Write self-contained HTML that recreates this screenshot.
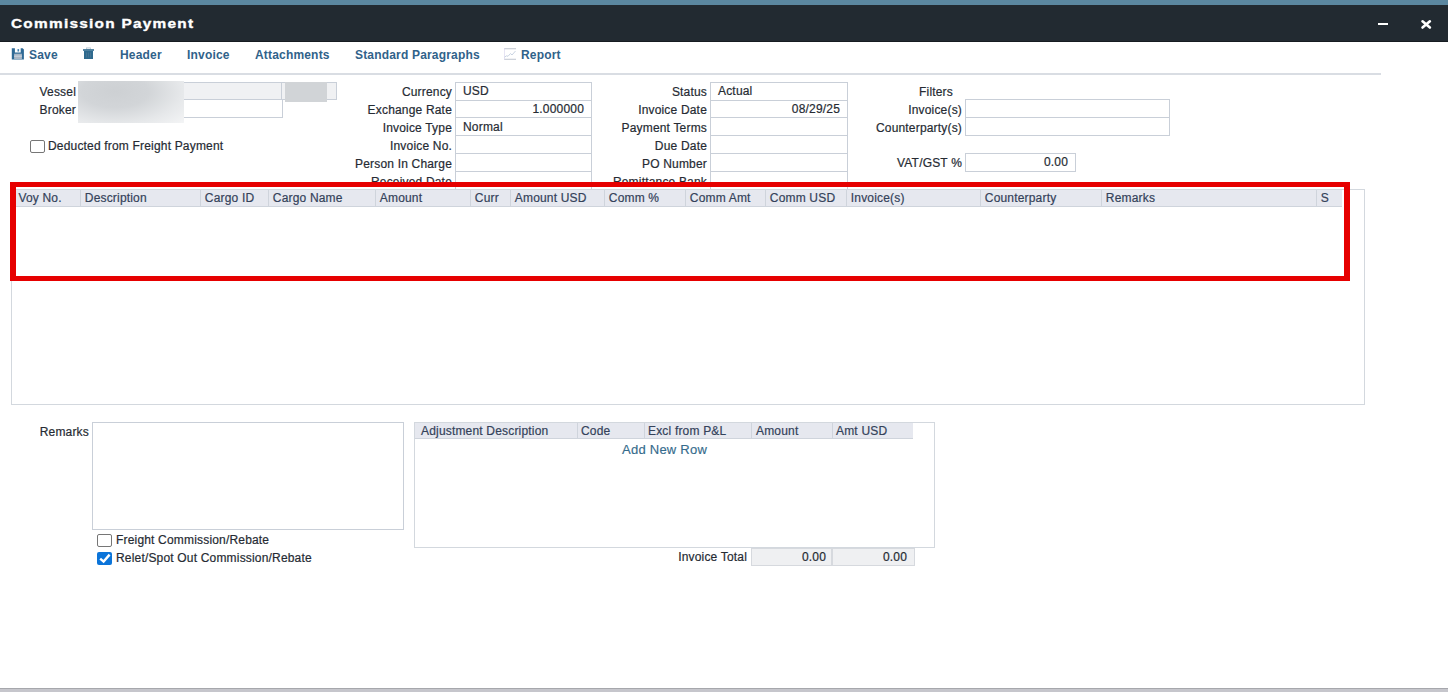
<!DOCTYPE html>
<html><head><meta charset="utf-8">
<style>
*{box-sizing:border-box;margin:0;padding:0}
html,body{width:1448px;height:692px;overflow:hidden;background:#fff;font-family:"Liberation Sans",sans-serif;font-size:12px;color:#2a2a2a;letter-spacing:0.18px}
.a{position:absolute}
#strip{left:0;top:0;width:1448px;height:5px;background:#5b87a0}
#tbar{left:0;top:5px;width:1448px;height:37px;background:#222a31;border-bottom:1px solid #161c21}
#title{left:11px;top:16px;font-size:13.5px;font-weight:bold;color:#fff;letter-spacing:1.1px;transform:scaleX(1.14);transform-origin:0 0;-webkit-text-stroke:0.35px #fff;line-height:16px;white-space:nowrap}
.tb{font-weight:bold;color:#30628a;line-height:14px;white-space:nowrap;top:48px}
#sep{left:0;top:73px;width:1381px;height:2px;background:#d9dde3}
.lb{line-height:14px;white-space:nowrap;text-align:right;color:#262b33;-webkit-text-stroke:0.2px #262b33}
.in{border:1px solid #c9cfd8;background:#fff;height:19px}
.iv{line-height:14px;white-space:nowrap;color:#262b33;-webkit-text-stroke:0.2px #262b33}
.gh{background:#e6e8ef;border-bottom:1px solid #cfd4dc}
.cs{width:1px;background:#cfd4dc}
.ht{line-height:14px;white-space:nowrap;color:#34425a;-webkit-text-stroke:0.2px #34425a}
</style></head><body>
<div class="a" id="strip"></div>
<div class="a" id="tbar"></div>
<div class="a" id="title">Commission Payment</div>
<!-- min / close -->
<div class="a" style="left:1378px;top:22.8px;width:10px;height:2.3px;background:#fff"></div>
<svg class="a" style="left:1420px;top:19px" width="12" height="11" viewBox="0 0 12 11"><path d="M2.5 2.3L9.9 8.5M9.9 2.3L2.5 8.5" stroke="#fff" stroke-width="2.6" stroke-linecap="round"/></svg>

<!-- toolbar -->
<svg class="a" style="left:11px;top:48px" width="14" height="13" viewBox="0 0 14 13">
<path d="M0.8 0.3H3.9V4.4H9.7V0.3H11.6L12.9 1.6V11.6H0.8Z" fill="#2f6a96"/>
<rect x="6.5" y="1.1" width="1.6" height="2.4" fill="#3f7fb0"/>
<rect x="3.1" y="5.7" width="7.8" height="5.3" fill="#a9b7c6"/>
<rect x="3.1" y="7.6" width="7.8" height="1.2" fill="#c9d2dc"/>
</svg>
<div class="a tb" style="left:29px">Save</div>
<svg class="a" style="left:82px;top:47px" width="13" height="13" viewBox="0 0 13 13">
<rect x="4.5" y="0.9" width="4" height="1.4" fill="none" stroke="#b3c3d0" stroke-width="0.8"/>
<rect x="1" y="2.2" width="11" height="1.6" fill="#2e6a8e"/>
<rect x="2" y="3.8" width="9" height="8.2" fill="#2e6a8e"/>
<rect x="4" y="5.5" width="0.8" height="5" fill="#4b7795"/>
<rect x="6.1" y="5.5" width="0.8" height="5" fill="#4b7795"/>
<rect x="8.2" y="5.5" width="0.8" height="5" fill="#4b7795"/>
</svg>
<div class="a tb" style="left:120px">Header</div>
<div class="a tb" style="left:187px">Invoice</div>
<div class="a tb" style="left:255px">Attachments</div>
<div class="a tb" style="left:355px">Standard Paragraphs</div>
<svg class="a" style="left:504px;top:48px" width="12" height="12" viewBox="0 0 12 12">
<rect x="0" y="0" width="12" height="1.3" fill="#cdd2da"/>
<rect x="0" y="10.7" width="12" height="1.3" fill="#cdd2da"/>
<rect x="0" y="0" width="0.7" height="12" fill="#dcd9f0"/>
<path d="M0.5 9.2L2.5 7.8L4 8.3L6.5 5.5L8 7L11.5 3" fill="none" stroke="#c9d3e2" stroke-width="1"/>
</svg>
<div class="a tb" style="left:521px">Report</div>
<div class="a" id="sep"></div>

<!-- col1 -->
<div class="a lb" style="left:0;width:76px;top:85px">Vessel</div>
<div class="a lb" style="left:0;width:76px;top:103px">Broker</div>
<div class="a in" style="left:78px;top:82px;width:204px;height:18px;background:#f0f1f3"></div>
<div class="a in" style="left:281px;top:82px;width:56px;height:18px;background:#f0f1f3"></div>
<div class="a" style="left:285px;top:82px;width:42px;height:20px;background:#d1d4d7"></div>
<div class="a in" style="left:78px;top:99px;width:205px;height:19px"></div>
<div class="a" style="left:78px;top:81px;width:106px;height:42px;background:radial-gradient(ellipse 90% 110% at 35% 25%,#cdd0d3 0%,#d2d5d8 35%,#e6e8ea 70%,#f4f5f6 100%)"></div>
<div class="a" style="left:30px;top:140px;width:15px;height:13px;border:1.3px solid #767676;border-radius:2px;background:#fff"></div>
<div class="a lb" style="left:48px;top:139px;text-align:left">Deducted from Freight Payment</div>

<!-- col2 -->
<div class="a lb" style="left:300px;width:152px;top:85px">Currency</div>
<div class="a lb" style="left:300px;width:152px;top:103px">Exchange Rate</div>
<div class="a lb" style="left:300px;width:152px;top:121px">Invoice Type</div>
<div class="a lb" style="left:300px;width:152px;top:139px">Invoice No.</div>
<div class="a lb" style="left:300px;width:152px;top:157px">Person In Charge</div>
<div class="a" style="left:300px;top:172px;width:152px;height:10px;overflow:hidden"><div class="lb" style="position:absolute;left:0;width:152px;top:3px">Received Date</div></div>
<div class="a in" style="left:455px;top:82px;width:137px;height:19px"></div>
<div class="a in" style="left:455px;top:100px;width:137px;height:18px"></div>
<div class="a in" style="left:455px;top:117px;width:137px;height:19px"></div>
<div class="a in" style="left:455px;top:135px;width:137px;height:19px"></div>
<div class="a in" style="left:455px;top:153px;width:137px;height:19px"></div>
<div class="a in" style="left:455px;top:171px;width:137px;height:19px"></div>
<div class="a iv" style="left:463px;top:84px">USD</div>
<div class="a iv" style="left:455px;width:129px;top:102px;text-align:right">1.000000</div>
<div class="a iv" style="left:463px;top:120px">Normal</div>

<!-- col3 -->
<div class="a lb" style="left:550px;width:157px;top:85px">Status</div>
<div class="a lb" style="left:550px;width:157px;top:103px">Invoice Date</div>
<div class="a lb" style="left:550px;width:157px;top:121px">Payment Terms</div>
<div class="a lb" style="left:550px;width:157px;top:139px">Due Date</div>
<div class="a lb" style="left:550px;width:157px;top:157px">PO Number</div>
<div class="a" style="left:550px;top:172px;width:157px;height:10px;overflow:hidden"><div class="lb" style="position:absolute;left:0;width:157px;top:3px">Remittance Bank</div></div>
<div class="a in" style="left:710px;top:82px;width:138px;height:19px"></div>
<div class="a in" style="left:710px;top:100px;width:138px;height:18px"></div>
<div class="a in" style="left:710px;top:117px;width:138px;height:19px"></div>
<div class="a in" style="left:710px;top:135px;width:138px;height:19px"></div>
<div class="a in" style="left:710px;top:153px;width:138px;height:19px"></div>
<div class="a in" style="left:710px;top:171px;width:138px;height:19px"></div>
<div class="a iv" style="left:718px;top:84px">Actual</div>
<div class="a iv" style="left:710px;width:130px;top:102px;text-align:right">08/29/25</div>

<!-- col4 -->
<div class="a lb" style="left:900px;width:72px;top:85px;text-align:center">Filters</div>
<div class="a lb" style="left:800px;width:162px;top:103px">Invoice(s)</div>
<div class="a lb" style="left:800px;width:162px;top:121px">Counterparty(s)</div>
<div class="a lb" style="left:800px;width:162px;top:156px">VAT/GST %</div>
<div class="a in" style="left:965px;top:99px;width:205px;height:19px"></div>
<div class="a in" style="left:965px;top:117px;width:205px;height:19px"></div>
<div class="a in" style="left:965px;top:153px;width:111px;height:19px"></div>
<div class="a iv" style="left:965px;width:103px;top:155px;text-align:right">0.00</div>

<!-- main grid -->
<div class="a" style="left:11px;top:189px;width:1354px;height:216px;border:1px solid #d3d8de"></div>
<div class="a gh" style="left:12px;top:190px;width:1330px;height:17px"></div>
<div class="a cs" style="left:80px;top:190px;height:17px"></div>
<div class="a cs" style="left:200px;top:190px;height:17px"></div>
<div class="a cs" style="left:268px;top:190px;height:17px"></div>
<div class="a cs" style="left:375px;top:190px;height:17px"></div>
<div class="a cs" style="left:470px;top:190px;height:17px"></div>
<div class="a cs" style="left:510px;top:190px;height:17px"></div>
<div class="a cs" style="left:604px;top:190px;height:17px"></div>
<div class="a cs" style="left:685px;top:190px;height:17px"></div>
<div class="a cs" style="left:765px;top:190px;height:17px"></div>
<div class="a cs" style="left:846px;top:190px;height:17px"></div>
<div class="a cs" style="left:980px;top:190px;height:17px"></div>
<div class="a cs" style="left:1101px;top:190px;height:17px"></div>
<div class="a cs" style="left:1316px;top:190px;height:17px"></div>
<div class="a ht" style="left:18.4px;top:191px">Voy No.</div>
<div class="a ht" style="left:84.8px;top:191px">Description</div>
<div class="a ht" style="left:204.8px;top:191px">Cargo ID</div>
<div class="a ht" style="left:272.8px;top:191px">Cargo Name</div>
<div class="a ht" style="left:379.8px;top:191px">Amount</div>
<div class="a ht" style="left:474.8px;top:191px">Curr</div>
<div class="a ht" style="left:514.8px;top:191px">Amount USD</div>
<div class="a ht" style="left:608.8px;top:191px">Comm %</div>
<div class="a ht" style="left:689.8px;top:191px">Comm Amt</div>
<div class="a ht" style="left:769.8px;top:191px">Comm USD</div>
<div class="a ht" style="left:850.8px;top:191px">Invoice(s)</div>
<div class="a ht" style="left:984.8px;top:191px">Counterparty</div>
<div class="a ht" style="left:1105.8px;top:191px">Remarks</div>
<div class="a ht" style="left:1320.8px;top:191px">S</div>

<!-- red highlight -->
<div class="a" style="left:10px;top:182px;width:1339.5px;height:5px;background:#e60000"></div>
<div class="a" style="left:10px;top:276px;width:1339.5px;height:5.2px;background:#e60000"></div>
<div class="a" style="left:10px;top:182px;width:5.8px;height:99.2px;background:#e60000"></div>
<div class="a" style="left:1344px;top:182px;width:5.5px;height:99.2px;background:#e60000"></div>

<!-- bottom -->
<div class="a lb" style="left:0;width:89px;top:425px">Remarks</div>
<div class="a in" style="left:92px;top:422px;width:312px;height:108px"></div>
<div class="a" style="left:97px;top:534px;width:14.5px;height:12.5px;border:1.3px solid #767676;border-radius:2px;background:#fff"></div>
<div class="a lb" style="left:116px;top:533px;text-align:left">Freight Commission/Rebate</div>
<div class="a" style="left:97px;top:552px;width:14.5px;height:13px;border-radius:2px;background:#0b74d9"></div>
<svg class="a" style="left:97px;top:552px" width="15" height="13" viewBox="0 0 15 13"><path d="M3.2 6.6L6.6 9.6L12.6 2.6" fill="none" stroke="#fff" stroke-width="2.4"/></svg>
<div class="a lb" style="left:116px;top:551px;text-align:left">Relet/Spot Out Commission/Rebate</div>

<div class="a" style="left:414px;top:422px;width:521px;height:126px;border:1px solid #d3d8de"></div>
<div class="a gh" style="left:415px;top:423px;width:498px;height:16px"></div>
<div class="a" style="left:577px;top:423px;width:1px;height:16px;background:#cfd4dc"></div>
<div class="a" style="left:644px;top:423px;width:1px;height:16px;background:#cfd4dc"></div>
<div class="a" style="left:751px;top:423px;width:1px;height:16px;background:#cfd4dc"></div>
<div class="a" style="left:832px;top:423px;width:1px;height:16px;background:#cfd4dc"></div>
<div class="a ht" style="left:421px;top:424px">Adjustment Description</div>
<div class="a ht" style="left:581px;top:424px">Code</div>
<div class="a ht" style="left:648px;top:424px">Excl from P&amp;L</div>
<div class="a ht" style="left:756px;top:424px">Amount</div>
<div class="a ht" style="left:836px;top:424px">Amt USD</div>
<div class="a iv" style="left:622px;top:443px;color:#356b8c;-webkit-text-stroke:0.15px #356b8c;font-size:13px;letter-spacing:0.25px">Add New Row</div>
<div class="a lb" style="left:600px;width:147px;top:550px">Invoice Total</div>
<div class="a" style="left:751px;top:548px;width:81px;height:18px;background:#eff0f2;border:1px solid #d6d9de"></div>
<div class="a" style="left:832px;top:548px;width:83px;height:18px;background:#eff0f2;border:1px solid #d6d9de"></div>
<div class="a iv" style="left:751px;width:75px;top:550px;text-align:right">0.00</div>
<div class="a iv" style="left:832px;width:75px;top:550px;text-align:right">0.00</div>

<div class="a" style="left:0;top:688px;width:1448px;height:1px;background:#a6a7ac"></div>
<div class="a" style="left:0;top:689px;width:1448px;height:3px;background:#c6c6cc"></div>

</body></html>
